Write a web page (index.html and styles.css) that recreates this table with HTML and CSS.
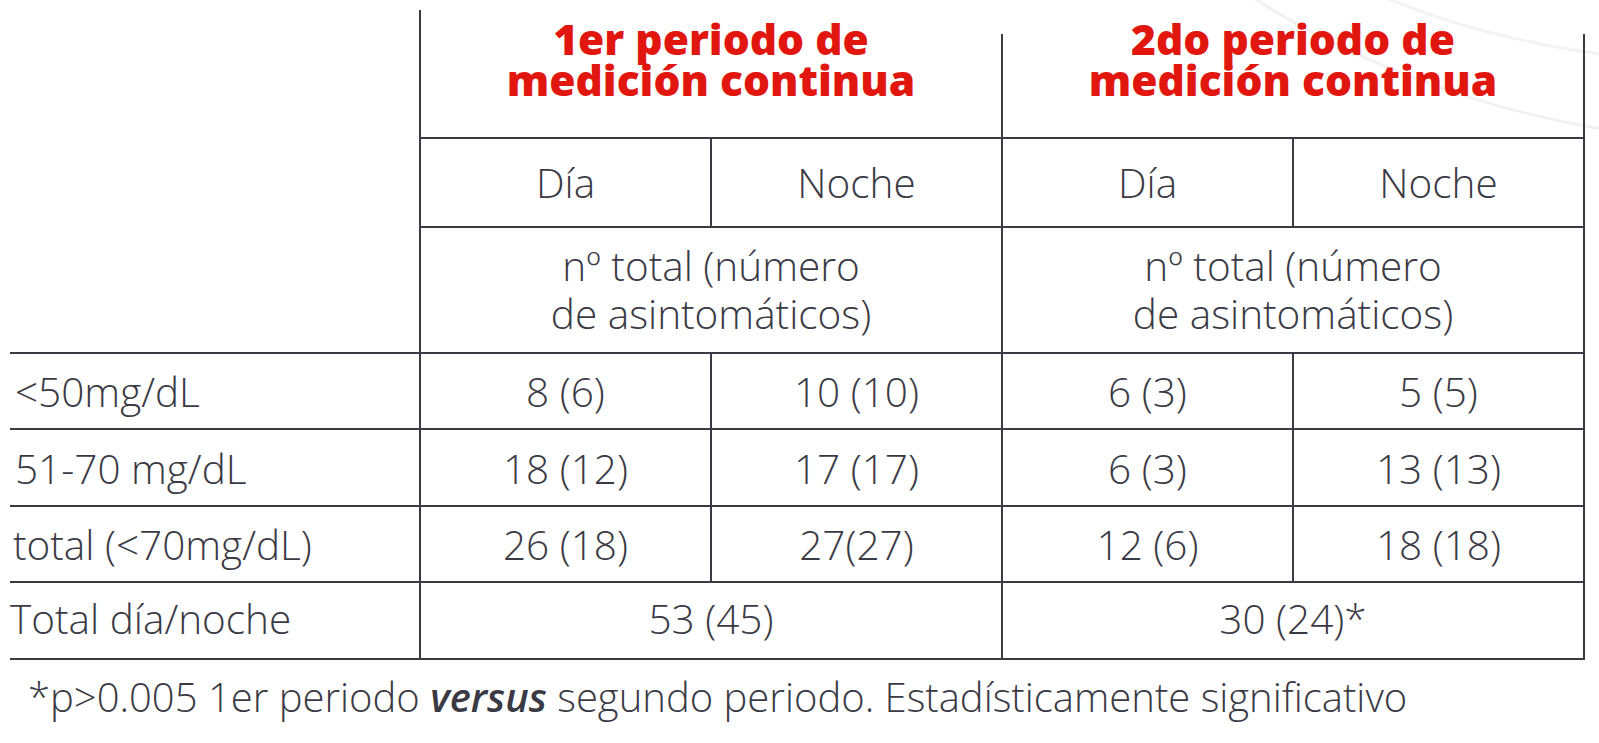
FILE: index.html
```html
<!DOCTYPE html>
<html lang="es">
<head>
<meta charset="utf-8">
<title>Tabla hipoglucemias</title>
<link rel="stylesheet" href="styles.css">
</head>
<body>
<svg class="swoosh" width="420" height="160" viewBox="0 0 420 160" aria-hidden="true">
  <path d="M70 -5 C 170 60, 300 110, 430 130" fill="none" stroke="#f1f1f3" stroke-width="3"/>
  <path d="M200 -5 C 270 25, 350 45, 430 55" fill="none" stroke="#f3f3f5" stroke-width="3"/>
</svg>
<main class="wrap">
  <div class="grid">
    <div class="corner"></div>
    <div class="period p1">1er periodo de<br>medición continua</div>
    <div class="period p2">2do periodo de<br>medición continua</div>

    <div class="sub bl">Día</div>
    <div class="sub bl">Noche</div>
    <div class="sub bl">Día</div>
    <div class="sub bl br">Noche</div>

    <div class="note bl">nº total (número<br>de asintomáticos)</div>
    <div class="note bl br">nº total (número<br>de asintomáticos)</div>

    <div class="label">&lt;50mg/dL</div>
    <div class="num bl">8 (6)</div>
    <div class="num bl">10 (10)</div>
    <div class="num bl">6 (3)</div>
    <div class="num bl br">5 (5)</div>

    <div class="label">51-70 mg/dL</div>
    <div class="num bl">18 (12)</div>
    <div class="num bl">17 (17)</div>
    <div class="num bl">6 (3)</div>
    <div class="num bl br">13 (13)</div>

    <div class="label l2">total (&lt;70mg/dL)</div>
    <div class="num bl">26 (18)</div>
    <div class="num bl">27(27)</div>
    <div class="num bl">12 (6)</div>
    <div class="num bl br">18 (18)</div>

    <div class="label l3 last">Total día/noche</div>
    <div class="num span bl last">53 (45)</div>
    <div class="num span bl br last">30 (24)*</div>
  </div>
  <p class="foot">*p&gt;0.005 1er periodo <em>versus</em> segundo periodo. Estadísticamente significativo</p>
</main>
</body>
</html>
```

FILE: styles.css
```css
html, body {
  margin: 0;
  padding: 0;
  background: #ffffff;
}
body {
  width: 1599px;
  height: 743px;
  overflow: hidden;
  position: relative;
  font-family: "Open Sans", "Liberation Sans", sans-serif;
  font-weight: 300;
  color: #3a3a44;
}
.swoosh {
  position: absolute;
  top: 0;
  right: 0;
  z-index: 0;
}
.wrap {
  position: relative;
  z-index: 1;
  padding: 10px 0 0 10px;
}
.grid {
  display: grid;
  grid-template-columns: 409px 291px 291px 291px 293px;
  grid-template-rows: 129px 89px 126px 76px 77px 76px 77px;
  font-size: 40.5px;
  line-height: 48px;
}
.grid > div {
  box-sizing: border-box;
  border-bottom: 2px solid #3b3b44;
}
.bl { border-left: 2px solid #3b3b44; }
.br { border-right: 2px solid #3b3b44; }
.corner {
  grid-row: 1 / span 3;
  grid-column: 1;
}
.period {
  grid-column: span 2;
  color: #e1160f;
  font-weight: 800;
  font-size: 42.5px;
  line-height: 41px;
  text-align: center;
  padding-top: 8px;
}
.p1 { border-left: 2px solid #3b3b44; }
.p2 {
  position: relative;
}
.p2::before {
  content: "";
  position: absolute;
  top: 24px;
  left: 0;
  right: 0;
  bottom: 0;
  border-left: 2px solid #3b3b44;
  border-right: 2px solid #3b3b44;
}
.sub, .num {
  display: flex;
  align-items: center;
  justify-content: center;
  padding-top: 2px;
}
.sub { padding-top: 0; }
.note {
  grid-column: span 2;
  text-align: center;
  padding-top: 14px;
}
.label {
  display: flex;
  align-items: center;
  padding-left: 5px;
  padding-top: 2px;
}
.l2 { padding-left: 3px; }
.l3 { padding-left: 0; }
.grid > .last { padding-top: 0; padding-bottom: 4px; }
.span { grid-column: span 2; }
.foot {
  margin: 12px 0 0 18px;
  font-size: 40px;
  line-height: 50px;
}
.foot em {
  font-weight: 600;
  font-style: italic;
}
```
